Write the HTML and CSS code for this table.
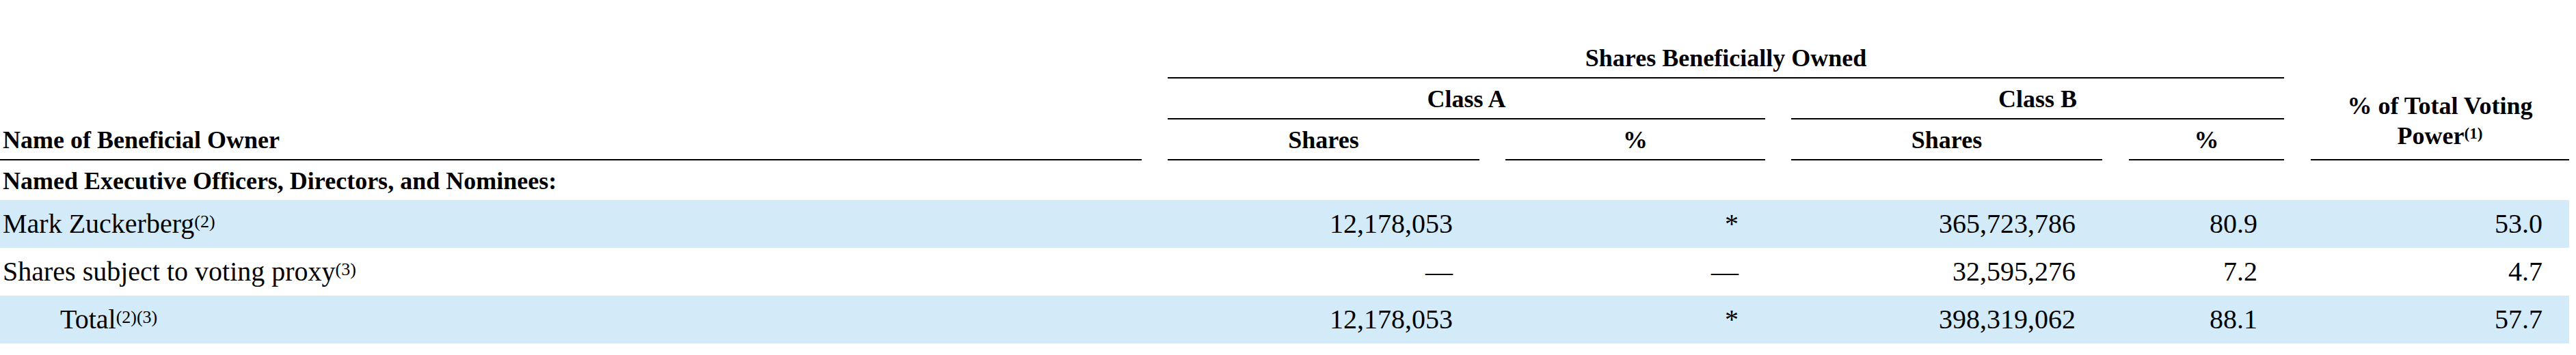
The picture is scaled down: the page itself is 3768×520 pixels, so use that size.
FILE: index.html
```html
<!DOCTYPE html>
<html lang="en">
<head>
<meta charset="utf-8">
<title>Beneficial Ownership</title>
<link rel="stylesheet" href="styles.css">
</head>
<body>
<div class="page">
<table class="own">
<colgroup>
<col class="c-name"><col class="c-gap"><col class="c-ash"><col class="c-gap"><col class="c-apc"><col class="c-gap"><col class="c-bsh"><col class="c-gap2"><col class="c-bpc"><col class="c-gap2"><col class="c-vote">
</colgroup>
<thead>
<tr class="h1">
<th class="name-h" rowspan="3">Name of Beneficial Owner</th>
<th class="gap" rowspan="3"></th>
<th class="grp" colspan="7">Shares Beneficially Owned</th>
<th class="gap" rowspan="3"></th>
<th class="vote-h" rowspan="3">% of Total Voting<br>Power<sup>(1)</sup></th>
</tr>
<tr class="h2">
<th class="grp" colspan="3">Class A</th>
<th class="gap"></th>
<th class="grp" colspan="3">Class B</th>
</tr>
<tr class="h3">
<th class="sub">Shares</th>
<th class="gap"></th>
<th class="sub">%</th>
<th class="gap"></th>
<th class="sub">Shares</th>
<th class="gap"></th>
<th class="sub">%</th>
</tr>
</thead>
<tbody>
<tr class="section"><td colspan="11">Named Executive Officers, Directors, and Nominees:</td></tr>
<tr class="row shade">
<td class="label">Mark Zuckerberg<sup>(2)</sup></td><td></td>
<td class="num">12,178,053</td><td></td>
<td class="num">*</td><td></td>
<td class="num">365,723,786</td><td></td>
<td class="num">80.9</td><td></td>
<td class="num">53.0</td>
</tr>
<tr class="row">
<td class="label">Shares subject to voting proxy<sup>(3)</sup></td><td></td>
<td class="num">—</td><td></td>
<td class="num">—</td><td></td>
<td class="num">32,595,276</td><td></td>
<td class="num">7.2</td><td></td>
<td class="num">4.7</td>
</tr>
<tr class="row shade">
<td class="label total">Total<sup>(2)(3)</sup></td><td></td>
<td class="num">12,178,053</td><td></td>
<td class="num">*</td><td></td>
<td class="num">398,319,062</td><td></td>
<td class="num">88.1</td><td></td>
<td class="num">57.7</td>
</tr>
</tbody>
</table>
</div>
</body>
</html>
```

FILE: styles.css
```css
html, body {
  margin: 0;
  padding: 0;
  background: #ffffff;
}

body {
  font-family: "Liberation Serif", "Times New Roman", serif;
  font-size: 36px;
  line-height: 44px;
  color: #000000;
}

.page {
  padding-top: 55px;
}

.own {
  border-collapse: separate;
  border-spacing: 0;
  table-layout: fixed;
  width: 3758px;
}

.own th,
.own td {
  padding: 0;
  font-weight: normal;
}

.c-name { width: 1670px; }
.c-gap { width: 38px; }
.c-gap2 { width: 39px; }
.c-ash { width: 456px; }
.c-apc { width: 380px; }
.c-bsh { width: 455px; }
.c-bpc { width: 227px; }
.c-vote { width: 378px; }

.h1, .h2, .h3 {
  height: 60px;
}

.own thead th {
  font-weight: bold;
  text-align: center;
  vertical-align: bottom;
  padding-bottom: 6px;
}

.own thead th.gap {
  border: 0;
}

.own thead th.grp,
.own thead th.sub {
  border-bottom: 2px solid #000000;
}

.own thead th.name-h {
  text-align: left;
  padding-left: 4px;
  border-bottom: 2px solid #000000;
}

.own thead th.vote-h {
  border-bottom: 2px solid #000000;
  padding-bottom: 12px;
}

.own thead th.vote-h sup {
  font-size: 23px;
}

.section {
  height: 58px;
}

.section td {
  font-weight: bold;
  vertical-align: bottom;
  padding-left: 4px;
  padding-bottom: 6px;
}

.row {
  height: 70px;
}

.row td {
  font-size: 40px;
  vertical-align: middle;
  white-space: nowrap;
}

.shade {
  background: #d3eaf9;
}

.row td.label {
  padding-left: 4px;
}

.row td.total {
  padding-left: 88px;
}

.row td.num {
  text-align: right;
  padding-right: 39px;
}

.own sup {
  font-size: 26px;
  line-height: 0;
  vertical-align: 8px;
}
```
